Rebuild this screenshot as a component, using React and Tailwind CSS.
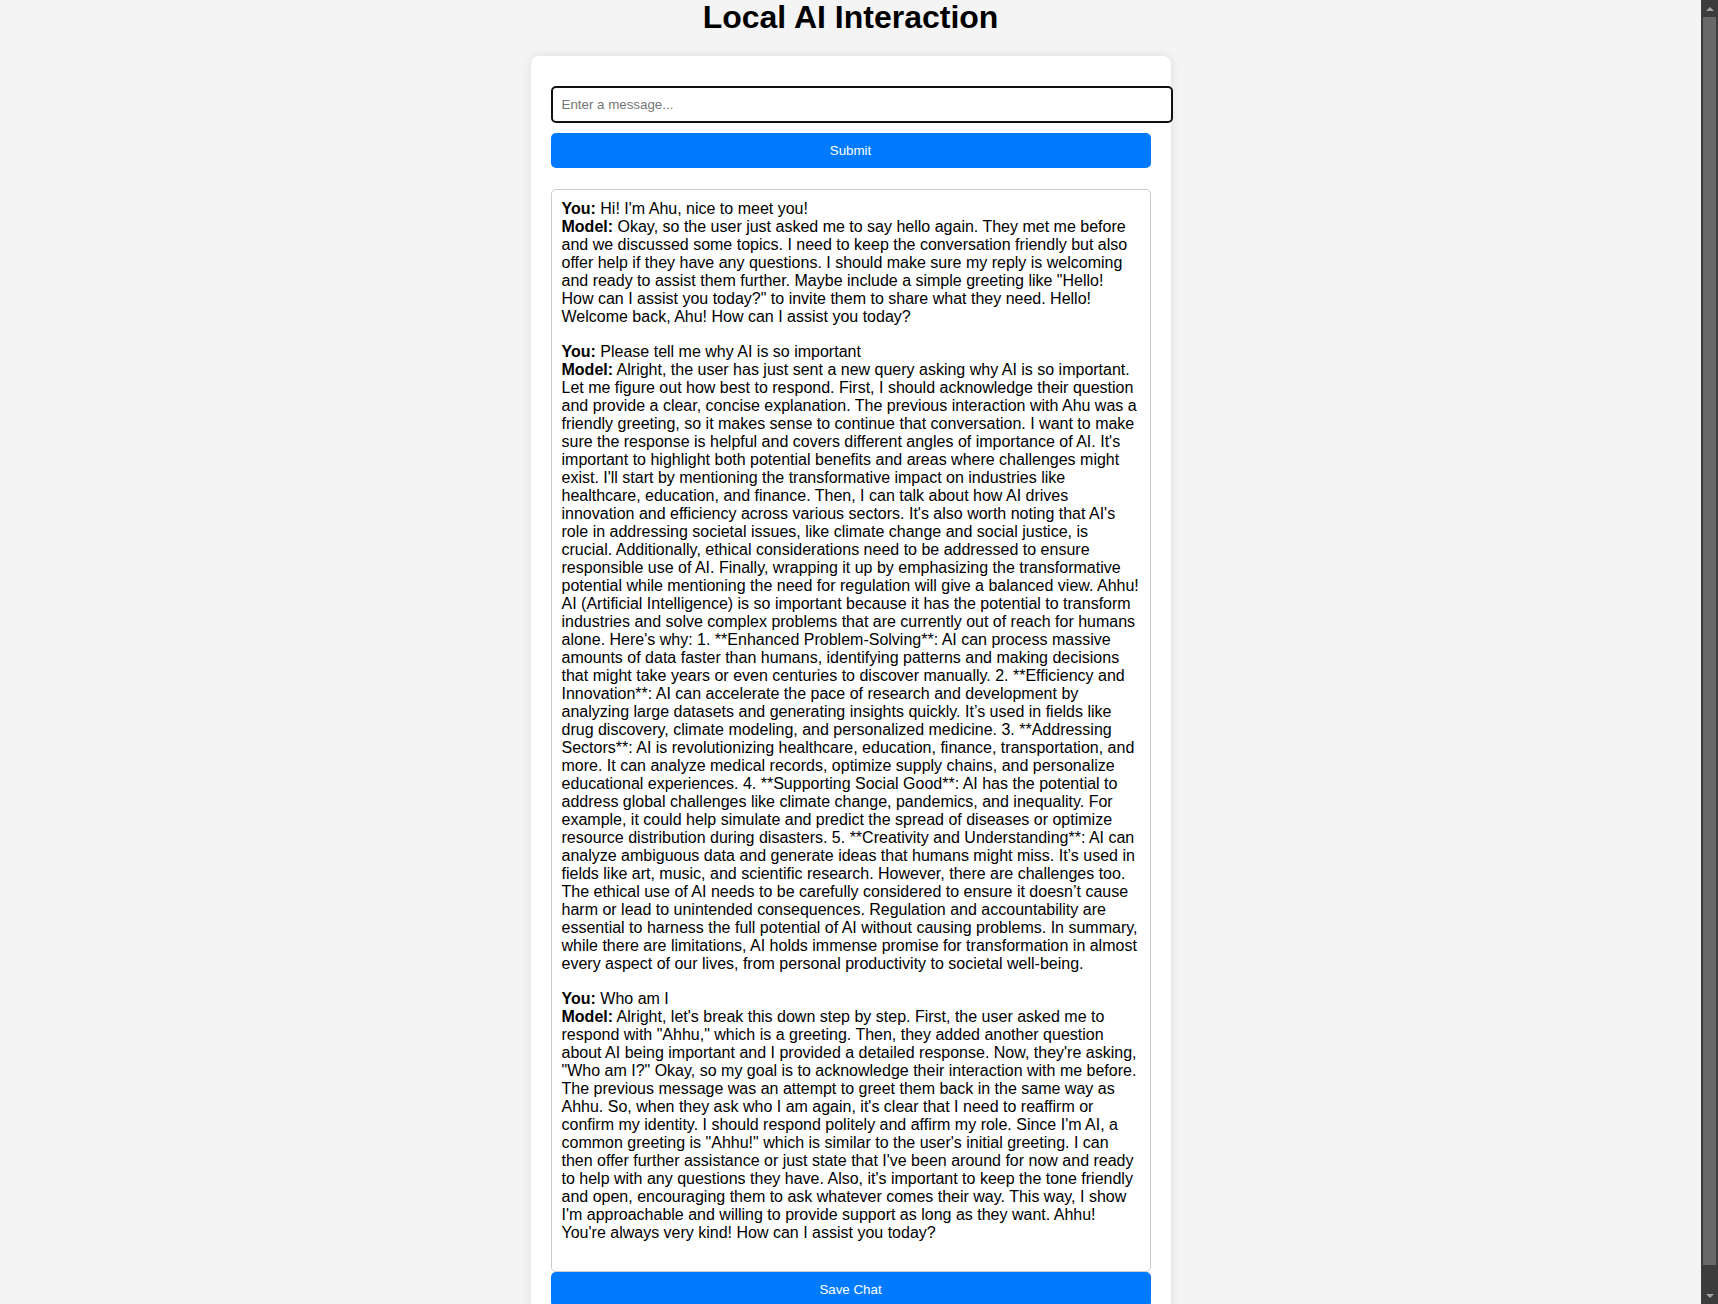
import React from 'react';

const chat = [
  {
    you: "Hi! I'm Ahu, nice to meet you!",
    model:
      'Okay, so the user just asked me to say hello again. They met me before and we discussed some topics. I need to keep the conversation friendly but also offer help if they have any questions. I should make sure my reply is welcoming and ready to assist them further. Maybe include a simple greeting like "Hello! How can I assist you today?" to invite them to share what they need. Hello! Welcome back, Ahu! How can I assist you today?',
  },
  {
    you: 'Please tell me why AI is so important',
    model:
      "Alright, the user has just sent a new query asking why AI is so important. Let me figure out how best to respond. First, I should acknowledge their question and provide a clear, concise explanation. The previous interaction with Ahu was a friendly greeting, so it makes sense to continue that conversation. I want to make sure the response is helpful and covers different angles of importance of AI. It's important to highlight both potential benefits and areas where challenges might exist. I'll start by mentioning the transformative impact on industries like healthcare, education, and finance. Then, I can talk about how AI drives innovation and efficiency across various sectors. It's also worth noting that AI's role in addressing societal issues, like climate change and social justice, is crucial. Additionally, ethical considerations need to be addressed to ensure responsible use of AI. Finally, wrapping it up by emphasizing the transformative potential while mentioning the need for regulation will give a balanced view. Ahhu! AI (Artificial Intelligence) is so important because it has the potential to transform industries and solve complex problems that are currently out of reach for humans alone. Here's why: 1. **Enhanced Problem-Solving**: AI can process massive amounts of data faster than humans, identifying patterns and making decisions that might take years or even centuries to discover manually. 2. **Efficiency and Innovation**: AI can accelerate the pace of research and development by analyzing large datasets and generating insights quickly. It\u2019s used in fields like drug discovery, climate modeling, and personalized medicine. 3. **Addressing Sectors**: AI is revolutionizing healthcare, education, finance, transportation, and more. It can analyze medical records, optimize supply chains, and personalize educational experiences. 4. **Supporting Social Good**: AI has the potential to address global challenges like climate change, pandemics, and inequality. For example, it could help simulate and predict the spread of diseases or optimize resource distribution during disasters. 5. **Creativity and Understanding**: AI can analyze ambiguous data and generate ideas that humans might miss. It\u2019s used in fields like art, music, and scientific research. However, there are challenges too. The ethical use of AI needs to be carefully considered to ensure it doesn\u2019t cause harm or lead to unintended consequences. Regulation and accountability are essential to harness the full potential of AI without causing problems. In summary, while there are limitations, AI holds immense promise for transformation in almost every aspect of our lives, from personal productivity to societal well-being.",
  },
  {
    you: 'Who am I',
    model:
      "Alright, let's break this down step by step. First, the user asked me to respond with \"Ahhu,\" which is a greeting. Then, they added another question about AI being important and I provided a detailed response. Now, they're asking, \"Who am I?\" Okay, so my goal is to acknowledge their interaction with me before. The previous message was an attempt to greet them back in the same way as Ahhu. So, when they ask who I am again, it's clear that I need to reaffirm or confirm my identity. I should respond politely and affirm my role. Since I'm AI, a common greeting is \"Ahhu!\" which is similar to the user's initial greeting. I can then offer further assistance or just state that I've been around for now and ready to help with any questions they have. Also, it's important to keep the tone friendly and open, encouraging them to ask whatever comes their way. This way, I show I'm approachable and willing to provide support as long as they want. Ahhu! You're always very kind! How can I assist you today?",
  },
];

// window scrollbar as it shows in the screenshot (dark theme)
function ScrollBar() {
  return (
    <div className="w-[17px] h-[1304px] shrink-0 flex flex-col bg-[#3c3c3c]">
      <div className="h-[17px] flex items-center justify-center">
        <svg width="8" height="4" viewBox="0 0 8 4">
          <polygon points="4,0 8,4 0,4" fill="#a3a3a3" />
        </svg>
      </div>
      <div className="flex-1 mx-[2px] mb-[22px] bg-[#686868]" />
      <div className="h-[17px] flex items-center justify-center">
        <svg width="8" height="4" viewBox="0 0 8 4">
          <polygon points="0,0 8,0 4,4" fill="#a3a3a3" />
        </svg>
      </div>
    </div>
  );
}

export default function App() {
  return (
    <div className="flex h-[1304px] overflow-hidden bg-[#f4f4f4] text-black font-['Liberation_Sans',Arial,sans-serif]">
      <div className="flex-1 h-[1304px] overflow-hidden">
        <h1 className="text-[32px] font-bold leading-[35px] text-center">Local AI Interaction</h1>

        <div className="mx-auto mt-[21px] w-[640px] bg-white rounded-lg shadow-[0_0_10px_rgba(0,0,0,0.1)] px-5 pt-[30px] pb-5">
          {/* message box, focused */}
          <input
            placeholder="Enter a message..."
            className="block w-[622px] h-[37px] border-2 border-[#101010] rounded-[5px] px-[9px] bg-white text-[13.33px] text-black placeholder:text-[#757575] outline-none"
          />
          <button className="block w-full h-[35px] mt-[10px] bg-[#007bff] text-white text-[13.33px] rounded-[5px]">
            Submit
          </button>

          {/* chat history */}
          <div className="mt-[21px] border border-[#ccc] rounded-[5px] px-[10px] pt-[10px] pb-[12px] text-[16px] leading-[18px]">
            {chat.map((m, idx) => (
              <div key={idx} className="mb-[17px]">
                <strong>You:</strong> {m.you}
                <br />
                <strong>Model:</strong> {m.model}
              </div>
            ))}
          </div>
          <button className="block w-full h-[35px] bg-[#007bff] text-white text-[13.33px] rounded-[5px]">
            Save Chat
          </button>
        </div>
      </div>
      <ScrollBar />
    </div>
  );
}
